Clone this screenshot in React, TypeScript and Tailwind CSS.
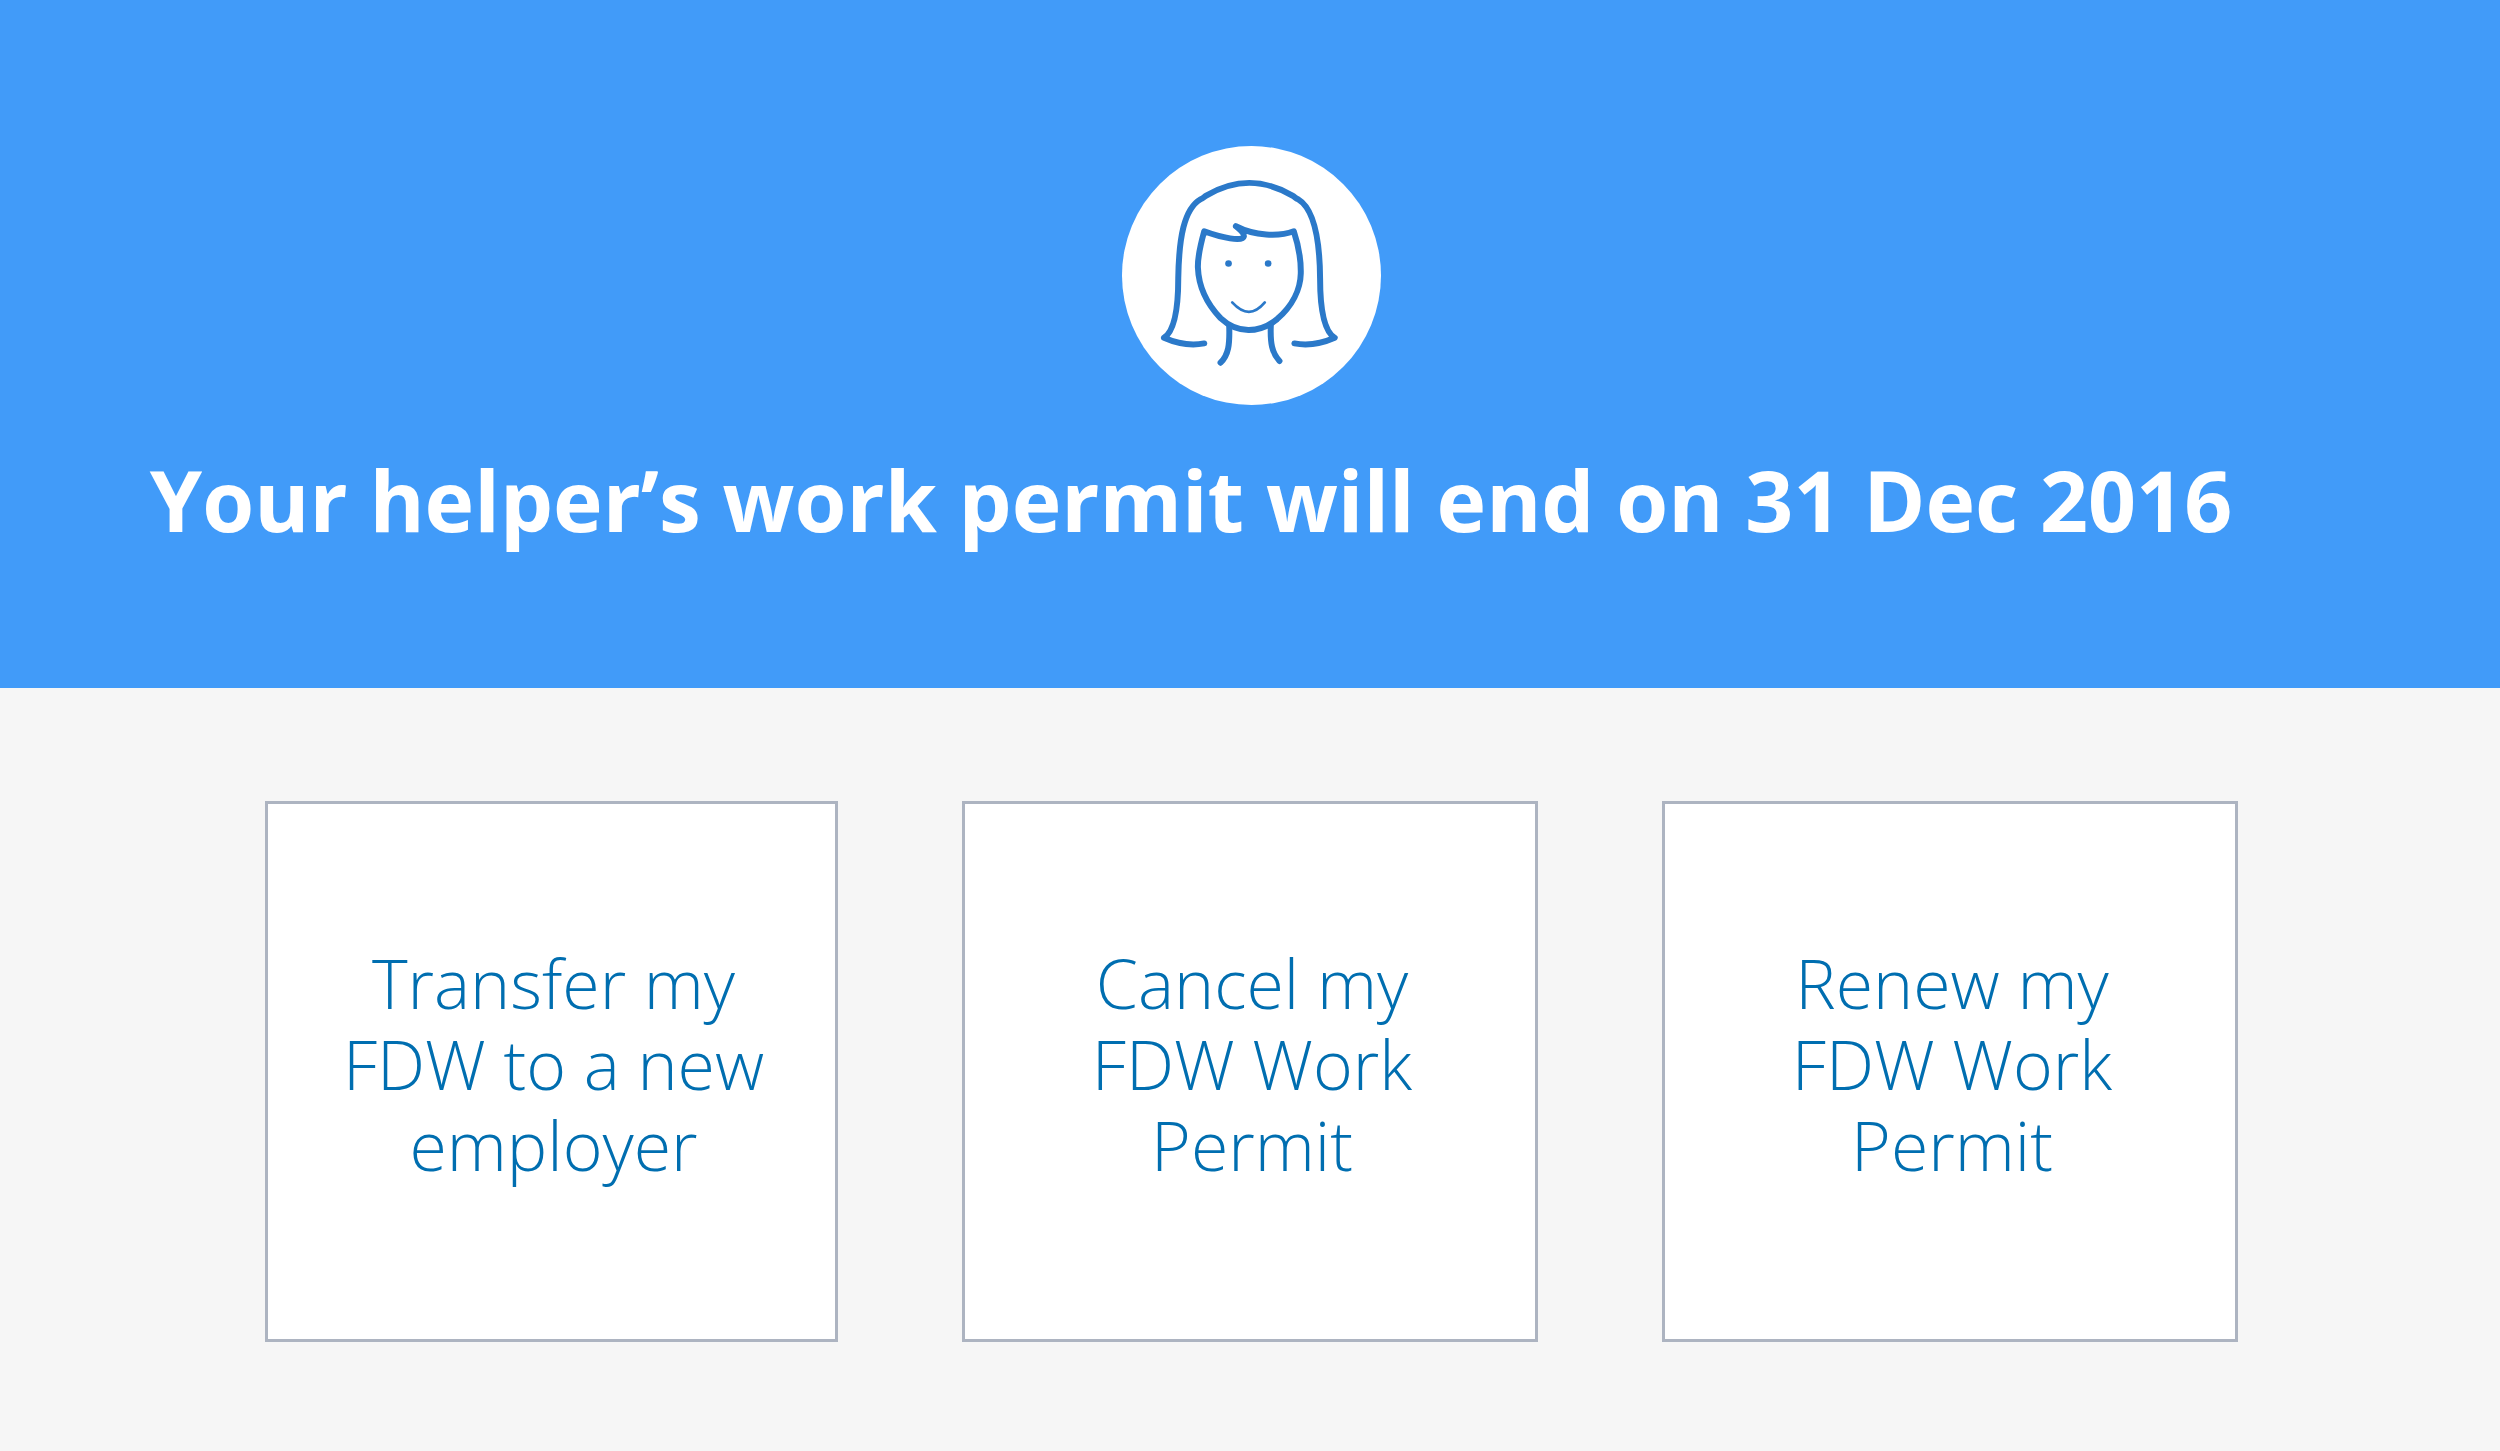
const actions = [
  "Transfer my FDW to a new employer",
  "Cancel my FDW Work Permit",
  "Renew my FDW Work Permit",
];

function HelperAvatar() {
  return (
    <svg
      viewBox="34 33 778 778"
      className="size-[259px]"
      role="img"
      aria-label="Helper"
      fill="none"
      stroke="#2b79c9"
      strokeWidth="18"
      strokeLinecap="round"
      strokeLinejoin="round"
    >
      <circle cx="423" cy="422" r="389" fill="#fff" stroke="none" />
      {/* hair */}
      <path d="M281 626C243 633 203 628 160 609C190 590 203 530 203 430C205 310 220 222 270 193C278 190 280 186 287 182C375 131 458 131 546 182C553 186 556 190 563 193C608 220 628 310 629 430C629 530 642 590 673 609C630 628 590 633 552 626" />
      {/* face and fringe */}
      <path d="M281 289C271 325 261 362 262 398C264 450 286 504 330 550C380 597 446 597 500 553C545 514 570 464 571 416C572 372 562 325 550 289C505 306 432 303 376 274C392 287 402 297 400 305C397 322 332 308 281 289Z" />
      {/* neck */}
      <path d="M356 572C358 630 354 660 330 684M481 572C479 624 484 654 507 679" />
      <path d="M365 503C400 541 431 541 463 503" strokeWidth="8" />
      <circle cx="354" cy="386" r="10" fill="#2b79c9" stroke="none" />
      <circle cx="473" cy="386" r="10" fill="#2b79c9" stroke="none" />
    </svg>
  );
}

export default function App() {
  return (
    <div className="min-h-screen bg-[#f6f6f6] font-['Open_Sans',sans-serif]">
      <header className="flex flex-col items-center bg-[#419bf9] pt-[146px] pb-32 pl-0.5">
        <HelperAvatar />
        <h1 className="mt-[35px] pr-[120px] text-center text-[84px] leading-[120px] font-bold text-white">
          Your helper’s work permit will end on 31 Dec 2016
        </h1>
      </header>
      <main className="grid grid-cols-[573fr_576fr_576fr] gap-[124px] pt-[113px] pr-[262px] pb-[109px] pl-[265px]">
        {actions.map((label) => (
          <a
            key={label}
            href="#"
            className="flex min-h-[541px] items-center justify-center border-3 border-[#adb4c1] bg-white pb-4 pl-1 text-center text-[68px] leading-[81px] font-light text-[#006eb0]"
          >
            <span className="max-w-[440px]">{label}</span>
          </a>
        ))}
      </main>
    </div>
  );
}
